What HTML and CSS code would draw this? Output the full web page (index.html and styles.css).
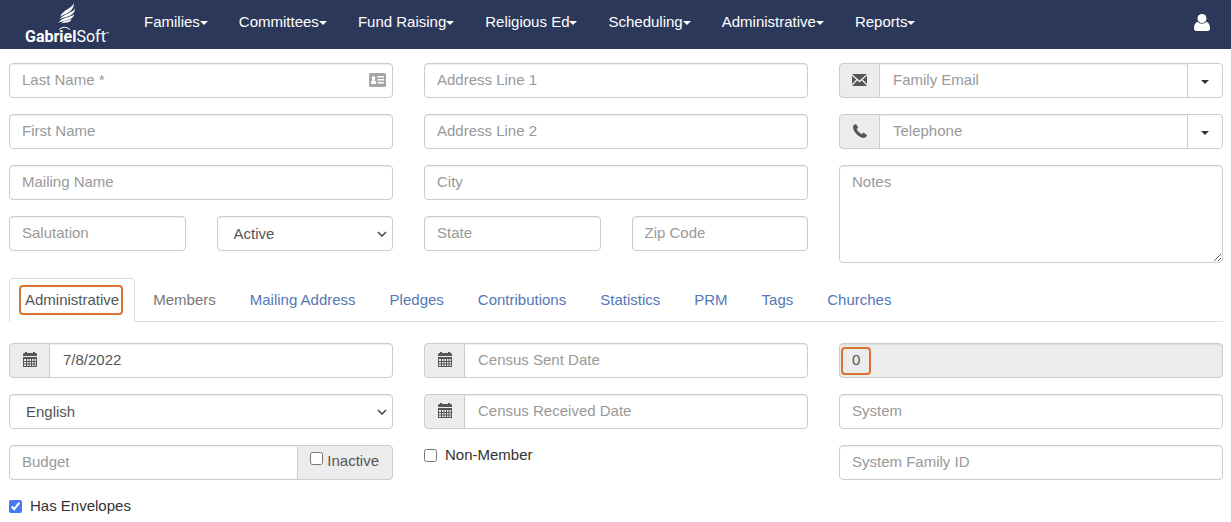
FILE: index.html
```html
<!DOCTYPE html>
<html lang="en">
<head>
<meta charset="UTF-8">
<meta name="viewport" content="width=device-width, initial-scale=1.0">
<title>GabrielSoft - Family</title>
<link rel="stylesheet" href="styles.css">
</head>
<body>
<svg class="sprite" aria-hidden="true">
  <symbol id="calendar" viewBox="0 0 14 15">
    <path d="M1 1h1V0h2v1h6V0h2v1h1l1 1v2H0V2z"/>
    <path fill-rule="evenodd" d="M0 5h14v10H0zM1 7v2h2V7zM4 7v2h1.500V7zM6.500 7v2H8V7zM9 7v2h1.500V7zM11.500 7v2H13V7zM1 10v1.500h2V10zM4 10v1.500h1.500V10zM6.500 10v1.500H8V10zM9 10v1.500h1.500V10zM11.500 10v1.500H13V10zM1 12.500V14h2v-1.500zM4 12.500V14h1.500v-1.500zM6.500 12.500V14H8v-1.500zM9 12.500V14h1.500v-1.500zM11.500 12.500V14H13v-1.500z"/>
  </symbol>
  <symbol id="envelope" viewBox="0 0 15 12">
    <path d="M0 0h15L7.500 6.500zM0 1.800 4.300 5.600 0 10zM15 1.800 10.700 5.600 15 10zM0 12 5.200 6.400 7.500 8.400 9.800 6.400 15 12z"/>
  </symbol>
  <symbol id="phone" viewBox="0 0 14 14">
    <path d="M.6 1.300C1.700.3 2.700-.1 3.200.3L4.900 3c.3.500.1.900-.3 1.200l-.8.700c.5 1.600 3.400 4.500 5.200 5.200l.8-.9c.4-.4.800-.5 1.300-.2l2.500 1.700c.5.400.4.900 0 1.400-.8 1.200-1.800 2-3.300 1.800C6 13.400.6 8.200.1 3.700c-.1-.9 0-1.800.5-2.400z"/>
  </symbol>
</svg>

<header class="navbar">
  <a class="brand" href="#">
    <svg class="brand-wing" width="18" height="22" viewBox="0 0 18 22" aria-hidden="true">
      <path d="M16 0C16 6 5 7 2 15c5-4 14-4 14-15z"/>
      <path d="M17 6C16 11 6 11 1.500 17.500 6 14.500 17 15 17 6z"/>
      <path d="M16.500 12C13 15.500 5 14.500 0 21c5-3 14-1.500 16.500-9z"/>
      <path d="M13.500 17C10 19 6 18 3 21.500c4-1.500 9 0 10.500-4.500z"/>
    </svg>
    <span class="brand-name"><b>Gabriel</b>Soft<small>™</small></span>
    <svg class="brand-arc" width="13" height="4" viewBox="0 0 13 4" aria-hidden="true"><path d="M1 3.500Q6.500-1 12 3.500"/></svg>
  </a>
  <nav class="menu">
    <a href="#">Families<i class="caret"></i></a>
    <a href="#">Committees<i class="caret"></i></a>
    <a href="#">Fund Raising<i class="caret"></i></a>
    <a href="#">Religious Ed<i class="caret"></i></a>
    <a href="#">Scheduling<i class="caret"></i></a>
    <a href="#">Administrative<i class="caret"></i></a>
    <a href="#">Reports<i class="caret"></i></a>
  </nav>
  <a class="user" href="#" aria-label="Account">
    <svg width="16" height="17" viewBox="0 0 16 17"><circle cx="8" cy="4.500" r="4.500"/><path d="M3.500 7.800C5.800 10.400 10.200 10.400 12.500 7.800 15 8.700 16 11 16 14.500c0 1.700-1 2.500-2.500 2.500h-11C1 17 0 16.200 0 14.500 0 11 1 8.700 3.500 7.800z"/></svg>
  </a>
</header>

<main>
  <form>
    <section class="grid">
      <div class="col">
        <div class="with-icon">
          <input class="control" type="text" placeholder="Last Name *" aria-label="Last Name">
          <svg class="card-icon" width="17" height="14" viewBox="0 0 17 14" aria-hidden="true">
            <path fill-rule="evenodd" d="M1.500 0h14A1.500 1.500 0 0 1 17 1.500v11a1.500 1.500 0 0 1-1.500 1.500h-14A1.500 1.500 0 0 1 0 12.500v-11A1.500 1.500 0 0 1 1.500 0zM2 11h5V9.500C7 8 6 7.500 5.300 7.300 6.800 6 6.500 3 4.500 3S2.200 6 3.700 7.300C3 7.500 2 8 2 9.500zM8.500 3v1.500H15V3zM8.500 6v1.500H15V6zM8.500 9v1.500H15V9z"/>
          </svg>
        </div>
        <input class="control" type="text" placeholder="First Name" aria-label="First Name">
        <input class="control" type="text" placeholder="Mailing Name" aria-label="Mailing Name">
        <div class="pair">
          <input class="control" type="text" placeholder="Salutation" aria-label="Salutation">
          <select class="control" aria-label="Status"><option>Active</option></select>
        </div>
      </div>
      <div class="col">
        <input class="control" type="text" placeholder="Address Line 1" aria-label="Address Line 1">
        <input class="control" type="text" placeholder="Address Line 2" aria-label="Address Line 2">
        <input class="control" type="text" placeholder="City" aria-label="City">
        <div class="pair">
          <input class="control" type="text" placeholder="State" aria-label="State">
          <input class="control" type="text" placeholder="Zip Code" aria-label="Zip Code">
        </div>
      </div>
      <div class="col">
        <div class="group">
          <span class="addon"><svg width="15" height="12"><use href="#envelope"/></svg></span>
          <input class="control" type="email" placeholder="Family Email" aria-label="Family Email">
          <button class="drop" type="button" aria-label="Email type"><i class="caret"></i></button>
        </div>
        <div class="group">
          <span class="addon"><svg width="14" height="14"><use href="#phone"/></svg></span>
          <input class="control" type="tel" placeholder="Telephone" aria-label="Telephone">
          <button class="drop" type="button" aria-label="Telephone type"><i class="caret"></i></button>
        </div>
        <textarea class="control notes" placeholder="Notes" aria-label="Notes"></textarea>
      </div>
    </section>

    <nav class="tabs">
      <a class="active" href="#"><span class="marked">Administrative</span></a>
      <a class="visited" href="#">Members</a>
      <a href="#">Mailing Address</a>
      <a href="#">Pledges</a>
      <a href="#">Contributions</a>
      <a href="#">Statistics</a>
      <a href="#">PRM</a>
      <a href="#">Tags</a>
      <a href="#">Churches</a>
    </nav>

    <section class="grid">
      <div class="col">
        <div class="group">
          <span class="addon"><svg width="14" height="15"><use href="#calendar"/></svg></span>
          <input class="control" type="text" value="7/8/2022" aria-label="Registered Date">
        </div>
        <select class="control" aria-label="Language"><option>English</option></select>
        <div class="group">
          <input class="control" type="text" placeholder="Budget" aria-label="Budget">
          <label class="addon inactive"><input type="checkbox">Inactive</label>
        </div>
        <label class="check"><input type="checkbox" checked>Has Envelopes</label>
      </div>
      <div class="col">
        <div class="group">
          <span class="addon"><svg width="14" height="15"><use href="#calendar"/></svg></span>
          <input class="control" type="text" placeholder="Census Sent Date" aria-label="Census Sent Date">
        </div>
        <div class="group">
          <span class="addon"><svg width="14" height="15"><use href="#calendar"/></svg></span>
          <input class="control" type="text" placeholder="Census Received Date" aria-label="Census Received Date">
        </div>
        <label class="check"><input type="checkbox">Non-Member</label>
      </div>
      <div class="col">
        <div class="number">
          <input class="control" type="text" value="0" aria-label="Envelope Number" readonly>
        </div>
        <input class="control" type="text" placeholder="System" aria-label="System">
        <input class="control" type="text" placeholder="System Family ID" aria-label="System Family ID">
      </div>
    </section>
  </form>
</main>
</body>
</html>
```
FILE: styles.css
```css
:root{
  --navy:#2c385a; --text:#555; --muted:#999; --border:#ccc; --addon:#ececec;
  --link:#5577b5; --orange:#d97530; --gap:31px;
}
*,*::after{box-sizing:border-box; margin:0; padding:0;}
body{ background:#fff; color:#333; font-family:"Liberation Sans",Arial,sans-serif; font-size:15px; line-height:20px;}
a{color:inherit; text-decoration:none;}
input,select,textarea,button{font:inherit; color:inherit;}
svg{display:block; fill:currentColor;}
.sprite{display:none;}
.caret{ display:inline-block; border:4px solid transparent; border-top-color:currentColor; border-bottom:0; vertical-align:middle;}

.navbar{ display:flex; align-items:center; height:49px; padding:0 21px 0 25px; background:var(--navy); color:#fff;}
.brand{ position:relative; flex:none; width:88px; height:49px; padding-top:2px; margin-right:31px;}
.brand-wing{ margin-left:33px;}
.brand-name{ display:block; font-family:Roboto,sans-serif; font-size:16px; line-height:20px; white-space:nowrap;}
.brand-name small{ font-size:6px; vertical-align:super;}
.brand-arc{ position:absolute; left:33px; top:26px; fill:none; stroke:#fff; stroke-width:1;}
.menu{ display:flex; gap:31px; flex:1; padding-bottom:6px; white-space:nowrap;}
.user{ padding-bottom:4px;}

main{ padding:14px 8px 0 9px;}
.grid{ display:grid; grid-template-columns:repeat(3,minmax(0,1fr)); gap:var(--gap);}
.col{ display:flex; flex-direction:column; gap:16px;}
.pair{ display:grid; grid-template-columns:1fr 1fr; gap:var(--gap);}
.control{
  display:block; width:100%; min-width:0; height:35px; padding:5px 12px 7px; border:1px solid var(--border); border-radius:4px;
  background:#fff; color:var(--text); outline:none; box-shadow:inset 0 1px 1px rgba(0,0,0,0.075);
}
.control::placeholder{ color:var(--muted); opacity:1;}
.control[readonly]{ background:var(--addon);}
select.control{
  appearance:none; padding:6px 24px 6px 16px;
  background:#fff url("data:image/svg+xml,%3Csvg xmlns='http://www.w3.org/2000/svg' width='10' height='6'%3E%3Cpath d='M1 1l4 4 4-4' fill='none' stroke='%23444' stroke-width='1.500'/%3E%3C/svg%3E") no-repeat right 5px center;
}
.notes{ height:98px; padding:6px 12px; resize:vertical;}
.with-icon{ position:relative;}
.card-icon{ position:absolute; right:7px; top:10px; color:#a5a5a5;}

.group{ display:flex;}
.group .control{ flex:1;}
.group > :not(:first-child){ border-top-left-radius:0; border-bottom-left-radius:0; margin-left:-1px;}
.group > :not(:last-child){ border-top-right-radius:0; border-bottom-right-radius:0;}
.addon{
  display:flex; align-items:center; justify-content:center; flex:none; width:41px; height:35px; padding-bottom:2px;
  border:1px solid var(--border); border-radius:4px; background:var(--addon); color:var(--text);
}
.group .addon + .control{ padding-left:13px;}
.addon.inactive{ width:auto; gap:4px; padding:0 13px 4px 12px;}
.inactive input{ margin-bottom:4px;}
.drop{ width:36px; height:35px; border:1px solid var(--border); border-radius:4px; background:#fff; color:#333;}
input[type="checkbox"]{ width:13px; height:13px; accent-color:#4a78f5;}
.check{ display:flex; align-items:center; gap:8px;}

.tabs{ display:flex; gap:2px; margin:15px 0 21px; border-bottom:1px solid #ddd; color:var(--link); white-space:nowrap;}
.tabs a{ padding:11px 15px; border:1px solid transparent; border-bottom:0; border-radius:4px 4px 0 0;}
.tabs .active{ margin-bottom:-1px; border-color:#ddd; background:#fff; color:var(--text);}
.tabs .visited{ color:#777;}

/* orange highlight boxes */
.marked,.number{ position:relative;}
.marked::after,.number::after{ content:""; position:absolute; border:2px solid var(--orange); border-radius:4px; pointer-events:none;}
.marked::after{ inset:-6px -4px -7px -6px;}
.number::after{ left:2px; top:4px; width:30px; height:28px;}
```
